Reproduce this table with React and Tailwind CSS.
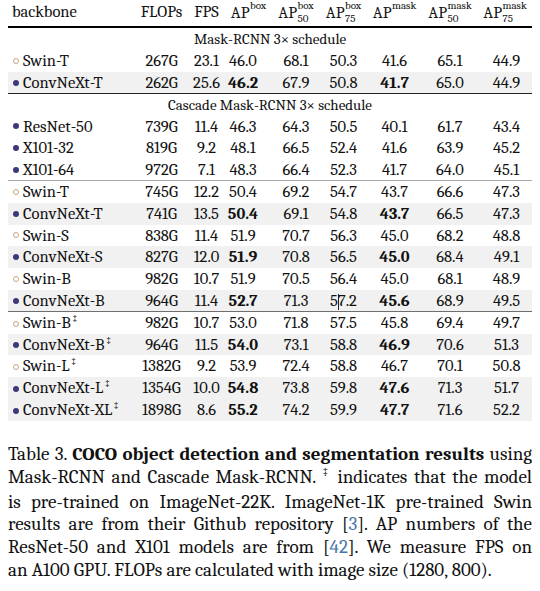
import React from 'react';

const cols = 'grid grid-cols-[127px_53px_37px_47px_48px_47px_55px_56px_54px]';

const rows = [
  { section: 'Mask-RCNN 3\u00d7 schedule' },
  { m: 'o', name: 'Swin-T', v: ['267G', '23.1', '46.0', '68.1', '50.3', '41.6', '65.1', '44.9'] },
  { m: 'f', name: 'ConvNeXt-T', v: ['262G', '25.6', '46.2', '67.9', '50.8', '41.7', '65.0', '44.9'], hl: true, rule: 'dark' },
  { section: 'Cascade Mask-RCNN 3\u00d7 schedule' },
  { m: 'f', name: 'ResNet-50', v: ['739G', '11.4', '46.3', '64.3', '50.5', '40.1', '61.7', '43.4'] },
  { m: 'f', name: 'X101-32', v: ['819G', '9.2', '48.1', '66.5', '52.4', '41.6', '63.9', '45.2'] },
  { m: 'f', name: 'X101-64', v: ['972G', '7.1', '48.3', '66.4', '52.3', '41.7', '64.0', '45.1'], rule: 'light' },
  { m: 'o', name: 'Swin-T', v: ['745G', '12.2', '50.4', '69.2', '54.7', '43.7', '66.6', '47.3'] },
  { m: 'f', name: 'ConvNeXt-T', v: ['741G', '13.5', '50.4', '69.1', '54.8', '43.7', '66.5', '47.3'], hl: true },
  { m: 'o', name: 'Swin-S', v: ['838G', '11.4', '51.9', '70.7', '56.3', '45.0', '68.2', '48.8'] },
  { m: 'f', name: 'ConvNeXt-S', v: ['827G', '12.0', '51.9', '70.8', '56.5', '45.0', '68.4', '49.1'], hl: true },
  { m: 'o', name: 'Swin-B', v: ['982G', '10.7', '51.9', '70.5', '56.4', '45.0', '68.1', '48.9'] },
  { m: 'f', name: 'ConvNeXt-B', v: ['964G', '11.4', '52.7', '71.3', '57.2', '45.6', '68.9', '49.5'], hl: true, rule: 'mid', cursor: true },
  { m: 'o', name: 'Swin-B', dd: true, v: ['982G', '10.7', '53.0', '71.8', '57.5', '45.8', '69.4', '49.7'] },
  { m: 'f', name: 'ConvNeXt-B', dd: true, v: ['964G', '11.5', '54.0', '73.1', '58.8', '46.9', '70.6', '51.3'], hl: true },
  { m: 'o', name: 'Swin-L', dd: true, v: ['1382G', '9.2', '53.9', '72.4', '58.8', '46.7', '70.1', '50.8'] },
  { m: 'f', name: 'ConvNeXt-L', dd: true, v: ['1354G', '10.0', '54.8', '73.8', '59.8', '47.6', '71.3', '51.7'], hl: true },
  { m: 'f', name: 'ConvNeXt-XL', dd: true, v: ['1898G', '8.6', '55.2', '74.2', '59.9', '47.7', '71.6', '52.2'], hl: true },
];

const ruleClass = {
  dark: 'border-b border-[#222]',
  light: 'border-b border-[#a8a8a8]',
  mid: 'border-b border-[#6f6f6f]',
};

const Ap = ({ sup, sub }) => (
  <span className="inline-flex items-center justify-center">
    <span>AP</span>
    <span className="inline-flex flex-col items-start text-[11px] leading-[12.5px] ml-[0.5px] -mt-[1px]">
      <span>{sup}</span>
      <span>{sub || '\u00a0'}</span>
    </span>
  </span>
);

const Marker = ({ type }) =>
  type === 'f' ? (
    <span className="w-[6px] h-[6px] rounded-full bg-[#3b3979] shrink-0" />
  ) : (
    <span className="w-[6px] h-[6px] rounded-full border border-[#c9a684] shrink-0" />
  );

const Cell = ({ children, i, bold }) => (
  <div className={`text-center ${i === 2 ? 'pr-[11px]' : ''} ${i === 7 ? 'pl-[3px]' : ''} ${bold ? 'font-bold' : ''}`}>
    {children}
  </div>
);

const Row = ({ r }) => {
  if (r.section) {
    return (
      <div className="h-[22px] leading-[22px] text-center text-[15px]">{r.section}</div>
    );
  }
  return (
    <div className={`${cols} h-[21.8px] leading-[21.8px] ${r.hl ? 'bg-[#f1f1f1]' : ''} ${r.rule ? ruleClass[r.rule] : ''}`}>
      <div className="flex items-center gap-[4px] pl-[5px]">
        <Marker type={r.m} />
        <span className="whitespace-nowrap">
          {r.name}
          {r.dd && <span className="relative -top-[6px] text-[11px] ml-[1px]">‡</span>}
        </span>
      </div>
      {r.v.map((val, i) => (
        <Cell key={i} i={i} bold={r.hl && r.m === 'f' && (i === 2 || i === 5)}>
          {r.cursor && i === 4 ? (
            <span>
              5<span className="inline-block w-px h-[16px] bg-[#222] align-middle -mr-px" />7.2
            </span>
          ) : (
            val
          )}
        </Cell>
      ))}
    </div>
  );
};

const Blue = ({ children }) => <span className="text-[#4a77aa]">{children}</span>;

const Line = ({ children, last }) => (
  <span className={`block whitespace-nowrap ${last ? 'text-left' : 'text-justify [text-align-last:justify]'}`}>
    {children}
  </span>
);

export default function App() {
  return (
    <div className="w-[540px] h-[591px] bg-white text-[#111] font-serif overflow-hidden">
      <div className="w-[524px] ml-[8px] text-[16.5px]">
        <div className={`${cols} h-[28px] border-b-2 border-black items-center`}>
          <div className="pl-[4px] -mt-[2px]">backbone</div>
          <div className="text-center -mt-[2px]">FLOPs</div>
          <div className="text-center -mt-[2px]">FPS</div>
          <div className="text-center"><Ap sup="box" /></div>
          <div className="text-center"><Ap sup="box" sub="50" /></div>
          <div className="text-center"><Ap sup="box" sub="75" /></div>
          <div className="text-center"><Ap sup="mask" /></div>
          <div className="text-center"><Ap sup="mask" sub="50" /></div>
          <div className="text-center"><Ap sup="mask" sub="75" /></div>
        </div>
        {rows.map((r, idx) => (
          <Row key={idx} r={r} />
        ))}
      </div>

      <div className="w-[524px] ml-[8px] mt-[22.5px] text-[19px] leading-[22.7px]">
        <Line>
          Table 3. <b>COCO object detection and segmentation results</b> using
        </Line>
        <Line>
          Mask-RCNN and Cascade Mask-RCNN. <span className="relative -top-[7px] text-[12px]">‡</span> indicates that the model
        </Line>
        <Line>is pre-trained on ImageNet-22K. ImageNet-1K pre-trained Swin</Line>
        <Line>
          results are from their Github repository [<Blue>3</Blue>]. AP numbers of the
        </Line>
        <Line>
          ResNet-50 and X101 models are from [<Blue>42</Blue>]. We measure FPS on
        </Line>
        <Line last>an A100 GPU. FLOPs are calculated with image size (1280, 800).</Line>
      </div>
    </div>
  );
}
